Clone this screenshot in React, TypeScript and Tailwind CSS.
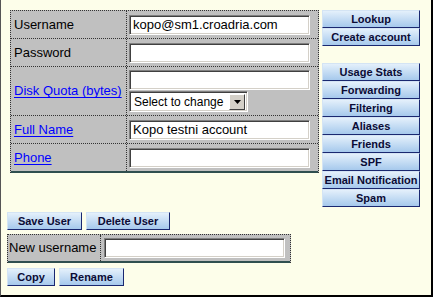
import React from "react";

const font = {fontFamily: '"Liberation Sans", Arial, sans-serif'};

const inputCls =
    "h-[20px] bg-white border border-t-[#808080] border-l-[#808080] border-b-white border-r-white shadow-[inset_1px_1px_0_#404040,inset_-1px_-1px_0_#d4d0c8] text-[13px] text-black px-[3px] outline-none";

const btnCls =
    "h-[18px] flex items-center justify-center text-[11px] leading-none font-bold text-[#0b0b35] border border-t-[#d4e4f4] border-l-[#d4e4f4] border-b-[#1a2870] border-r-[#1a2870] bg-linear-to-b from-[#e4f0fb] to-[#a6c9ec] whitespace-nowrap";

const Btn = ({label, className = ""}: {label: string; className?: string}) => (
    <button type="button" className={`${btnCls} ${className}`}>
        {label}
    </button>
);

const Label = ({text, link}: {text: string; link?: boolean}) =>
    link ? (
        <a href="#" className="text-[13px] text-[#0000ff] underline underline-offset-[2px]">
            {text}
        </a>
    ) : (
        <span className="text-[13px] text-black">{text}</span>
    );

const Row = ({label, link, children, h, last}: {
    label: string;
    link?: boolean;
    children: React.ReactNode;
    h: string;
    last?: boolean;
}) => (
    <div className={`flex ${h} ${last ? "" : "border-b border-dotted border-[#333]"}`}>
        <div className="w-[116px] flex items-center pl-[3px] border-r border-dotted border-[#333]">
            <Label text={label} link={link}/>
        </div>
        <div className="flex-1 flex flex-col justify-center pl-[2px] gap-[1px]">{children}</div>
    </div>
);

export default function App() {
    return (
        <div
            style={font}
            className="w-[433px] h-[297px] bg-[#fdfeea] border-l border-r-2 border-b-2 border-l-[#555] border-r-black border-b-black overflow-hidden"
        >
            <div className="flex pt-[10px] pl-[9px]">
                <div className="w-[309px] h-[163px] bg-[#c0c0c0] border border-b-0 border-dotted border-[#333] pb-[2px] shadow-[inset_0_-2px_0_#2f4f4f]">
                    <Row label="Username" h="h-[28px]">
                        <input className={`${inputCls} w-[181px]`} defaultValue="kopo@sm1.croadria.com"/>
                    </Row>
                    <Row label="Password" h="h-[28px]">
                        <input type="password" className={`${inputCls} w-[181px]`}/>
                    </Row>
                    <Row label="Disk Quota (bytes)" link h="h-[49px]">
                        <input className={`${inputCls} w-[181px]`}/>
                        <div className="w-[119px] h-[21px] bg-white border border-t-[#808080] border-l-[#808080] border-b-white border-r-white shadow-[inset_1px_1px_0_#404040,inset_-1px_-1px_0_#d4d0c8] flex items-center pl-[4px] pr-[2px]">
                            <span className="flex-1 text-[12px] text-black whitespace-nowrap">Select to change</span>
                            <span className="w-[16px] h-[16px] bg-[#d4d0c8] border border-t-white border-l-white border-b-[#404040] border-r-[#404040] flex items-center justify-center">
                                <svg width="7" height="4" viewBox="0 0 7 4">
                                    <path d="M0 0H7L3.5 4Z" fill="#000"/>
                                </svg>
                            </span>
                        </div>
                    </Row>
                    <Row label="Full Name" link h="h-[28px]">
                        <input className={`${inputCls} w-[181px]`} defaultValue="Kopo testni account"/>
                    </Row>
                    <Row label="Phone" link h="h-[27px]" last>
                        <input className={`${inputCls} w-[181px]`}/>
                    </Row>
                </div>

                <div className="w-[98px] ml-[3px] flex flex-col">
                    <Btn label="Lookup"/>
                    <Btn label="Create account"/>
                    <div className="h-[17px]"/>
                    <Btn label="Usage Stats"/>
                    <Btn label="Forwarding"/>
                    <Btn label="Filtering"/>
                    <Btn label="Aliases"/>
                    <Btn label="Friends"/>
                    <Btn label="SPF"/>
                    <Btn label="Email Notification"/>
                    <Btn label="Spam"/>
                </div>
            </div>

            <div className="pl-[6px] mt-[5px] flex flex-col">
                <div className="flex gap-[4px]">
                    <Btn label="Save User" className="w-[75px]"/>
                    <Btn label="Delete User" className="w-[84px]"/>
                </div>
                <div className="mt-[4px] w-[284px] h-[29px] flex bg-[#c0c0c0] border border-b-0 border-dotted border-[#333] pb-[2px] shadow-[inset_0_-2px_0_#2f4f4f]">
                    <div className="w-[93px] flex items-center pl-[1px] border-r border-dotted border-[#333]">
                        <span className="text-[13px] text-black">New username</span>
                    </div>
                    <div className="flex items-center pl-[3px]">
                        <input className={`${inputCls} w-[181px]`}/>
                    </div>
                </div>
                <div className="flex gap-[4px] mt-[5px]">
                    <Btn label="Copy" className="w-[48px]"/>
                    <Btn label="Rename" className="w-[65px]"/>
                </div>
            </div>
        </div>
    );
}
